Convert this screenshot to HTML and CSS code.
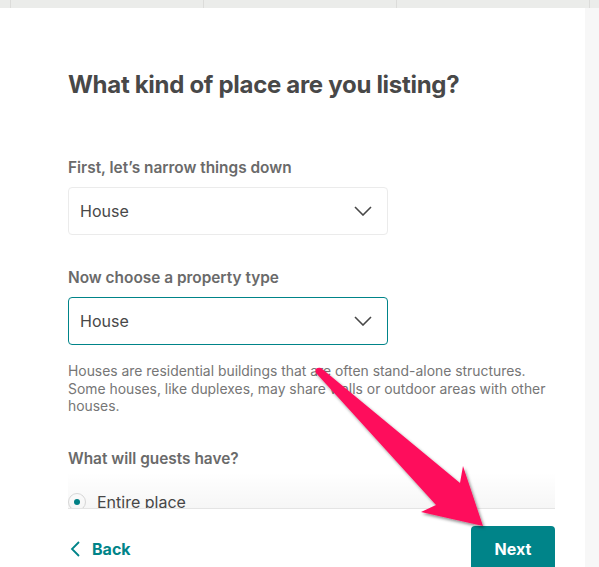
FILE: index.html
```html
<!DOCTYPE html>
<html lang="en">
<head>
<meta charset="utf-8">
<title>What kind of place are you listing?</title>
<link rel="stylesheet" href="styles.css">
</head>
<body>
<div class="topbar">
  <div class="seg seg-first"></div>
  <div class="seg"></div>
  <div class="seg"></div>
  <div class="seg"></div>
  <div class="seg seg-last"></div>
</div>
<div class="layout">
  <main class="main">
    <div class="scroll">
      <h1 class="title">What kind of place are you listing?</h1>

      <div class="field field-first">
        <label class="label">First, let’s narrow things down</label>
        <div class="select">
          <span>House</span>
          <svg class="chev" width="18" height="10" viewBox="0 0 18 10"><path d="M1 1 L9 9 L17 1" fill="none" stroke="#484848" stroke-width="1.6"/></svg>
        </div>
      </div>

      <div class="field">
        <label class="label">Now choose a property type</label>
        <div class="select select-active">
          <span>House</span>
          <svg class="chev" width="18" height="10" viewBox="0 0 18 10"><path d="M1 1 L9 9 L17 1" fill="none" stroke="#484848" stroke-width="1.6"/></svg>
        </div>
        <p class="desc">Houses are residential buildings that are often stand-alone structures. Some houses, like duplexes, may share walls or outdoor areas with other houses.</p>
      </div>

      <div class="field">
        <label class="label">What will guests have?</label>
        <div class="radio-row">
          <span class="radio"><span class="dot"></span></span>
          <span class="radio-text">Entire place</span>
        </div>
      </div>
    </div>
    <footer class="footer">
      <a class="back">
        <svg width="12" height="16" viewBox="0 0 12 16"><path d="M9 1 L2 8 L9 15" fill="none" stroke="#008489" stroke-width="1.8"/></svg>
        <span>Back</span>
      </a>
      <button class="next">Next</button>
    </footer>
  </main>
  <aside class="side"></aside>
</div>
<svg class="annot" width="599" height="567" viewBox="0 0 599 567">
  <defs>
    <filter id="sh" x="-20%" y="-20%" width="140%" height="140%">
      <feDropShadow dx="1.5" dy="2" stdDeviation="1.6" flood-color="#000" flood-opacity="0.45"/>
    </filter>
  </defs>
  <path d="M316 373 Q314 367 321 368 L460 483 L463 466 L483 526 L421 512 L436 505 Z" fill="#fe0f5c" filter="url(#sh)"/>
</svg>
</body>
</html>
```
FILE: styles.css
```css
* { box-sizing: border-box; }
html, body { margin: 0; padding: 0; }
body {
  width: 599px;
  height: 567px;
  overflow: hidden;
  background: #fff;
  font-family: "Inter", "Noto Sans", sans-serif;
  color: #484848;
  position: relative;
}
.topbar {
  height: 8px;
  display: flex;
  background: #ebecea;
}
.seg { border-right: 1px solid #dcdcda; width: 193px; }
.seg-first { width: 11px; }
.seg-last { flex: 1; border-right: none; }
.layout { display: flex; height: 559px; }
.main {
  width: 585px;
  display: flex;
  flex-direction: column;
  padding: 0 30px 0 68px;
}
.side { flex: 1; background: #f7f7f7; }
.scroll {
  height: 500px;
  flex-shrink: 0;
  overflow: hidden;
  position: relative;
  padding-top: 62px;
}
.scroll::after {
  content: "";
  position: absolute;
  left: 0; right: 0; bottom: 0;
  height: 36px;
  background: linear-gradient(to bottom, rgba(0,0,0,0), rgba(0,0,0,0.035));
}
.title {
  margin: 0 0 58px;
  font-size: 24px;
  line-height: 30px;
  font-weight: 700;
  color: #484848;
  letter-spacing: -0.3px;
}
.field { margin-bottom: 33px; }
.field-first { margin-bottom: 33px; }
.label {
  display: block;
  font-size: 15.4px;
  line-height: 20px;
  font-weight: 600;
  color: #6a6a6a;
  margin-bottom: 9px;
}
.select {
  width: 320px;
  height: 48px;
  border: 1px solid #ebebeb;
  border-radius: 4px;
  display: flex;
  align-items: center;
  justify-content: space-between;
  padding: 0 15px 0 11px;
  font-size: 16px;
  color: #484848;
}
.select-active { border-color: #008489; }
.desc {
  margin: 18px 0 0;
  font-size: 13.9px;
  line-height: 17.7px;
  color: #767676;
  width: 486px;
}
.radio-row {
  display: flex;
  align-items: center;
  gap: 11px;
  margin-top: 23px;
}
.radio {
  width: 18px;
  height: 18px;
  border: 1px solid #dcdcdc;
  border-radius: 50%;
  display: flex;
  align-items: center;
  justify-content: center;
}
.dot { width: 6px; height: 6px; border-radius: 50%; background: #008489; }
.radio-text { font-size: 16px; color: #484848; }
.footer {
  border-top: 1px solid #e4e4e4;
  display: flex;
  justify-content: space-between;
  align-items: flex-start;
  padding-top: 17px;
}
.back {
  display: flex;
  align-items: center;
  gap: 10px;
  color: #008489;
  font-weight: 700;
  font-size: 16px;
  margin-top: 13px;
  padding-left: 2px;
}
.next {
  width: 84px;
  height: 48px;
  background: #008489;
  border: none;
  border-radius: 4px;
  color: #fff;
  font-family: inherit;
  font-weight: 700;
  font-size: 16px;
  padding: 0;
  padding-bottom: 3px;
}
.annot {
  position: absolute;
  left: 0;
  top: 0;
  pointer-events: none;
}
```
